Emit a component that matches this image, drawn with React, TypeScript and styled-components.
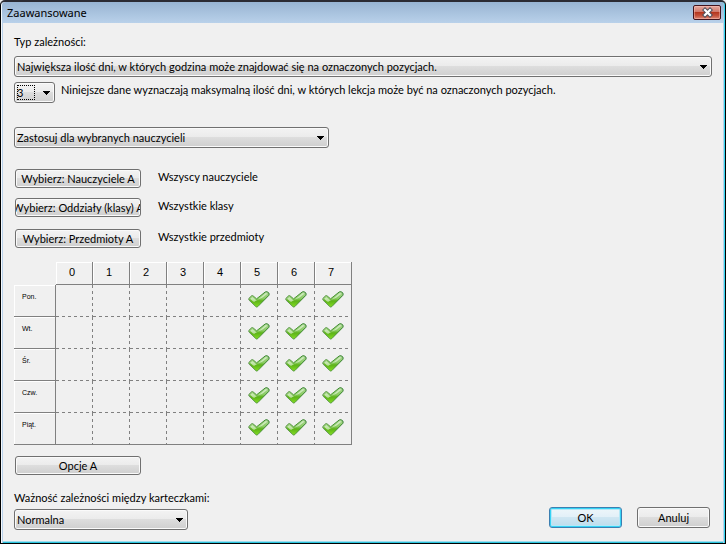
import React, { useState } from 'react';
import styled, { createGlobalStyle, css } from 'styled-components';

const Global = createGlobalStyle`
  * { box-sizing: border-box; }
  body { margin: 0; background: #f0f0f0; }
  body, button, select { font: 11px/14px Lato, "Open Sans", sans-serif; color: #000; }
`;

const Dialog = styled.div`
  min-height: 100vh;
  display: flex;
  flex-direction: column;
  border: 1px solid #000;
  border-top: 2px solid #2b2b33;
  border-radius: 5px 5px 0 0;
  background: #f0f0f0;
  box-shadow: inset 1px 0 #f4f9fd, inset 2px 0 #b9d1ea, inset -1px 0 #35d6ee, inset -2px 0 #b9d1ea,
    inset 0 -1px #2cc4dc, inset 0 -2px #9fdcee;
`;

const TitleBar = styled.header`
  height: 21px;
  margin: 0 1px;
  padding: 0 3px 0 5px;
  display: flex;
  align-items: center;
  justify-content: space-between;
  border-radius: 4px 4px 0 0;
  background: linear-gradient(#98b4d2, #b9d1ea);
`;

const Title = styled.h1`
  margin: 0;
  font: 11px/16px "Noto Sans", "Open Sans", sans-serif;
`;

const CloseButton = styled.button`
  width: 28px;
  height: 15px;
  padding: 0;
  display: grid;
  place-items: center;
  border: 1px solid #43141c;
  border-radius: 2px;
  background: linear-gradient(#e5aaa0, #d0786a 45%, #b5371f 50%, #c4523c 75%, #dc8a78);
  box-shadow: inset 0 0 0 1px rgba(255, 200, 190, 0.45);
`;

const Body = styled.main`
  flex: 1;
  display: flex;
  flex-direction: column;
  align-items: flex-start;
  padding: 11px 13px 13px;
`;

const Label = styled.label`
  display: block;
  line-height: 16px;
  white-space: nowrap;
`;

const Row = styled.div<{ $top: number; $gap?: number; $indent?: boolean }>`
  width: 100%;
  margin-top: ${(p) => p.$top}px;
  padding-left: ${(p) => (p.$indent ? 1 : 0)}px;
  display: flex;
  gap: ${(p) => p.$gap ?? 17}px;
`;

const SelectBox = styled.span<{ $width: string }>`
  position: relative;
  flex: none;
  display: block;
  width: ${(p) => p.$width};
  max-width: 100%;
`;

const face = css`
  border: 1px solid #707070;
  border-radius: 3px;
  background: linear-gradient(#f3f3f3, #ebebeb 48%, #dddddd 50%, #cfcfcf);
  box-shadow: inset 0 0 0 1px #fafafa;
`;

const Select = styled.select`
  ${face}
  appearance: none;
  display: block;
  width: 100%;
  height: 21px;
  padding: 0 20px 0 2px;
  outline: none;
`;

const Arrow = styled.svg`
  position: absolute;
  right: 5px;
  top: 9px;
  pointer-events: none;
`;

const FocusMark = styled.span`
  position: absolute;
  left: 3px;
  top: 3px;
  width: 18px;
  height: 15px;
  border: 1px dotted #000;
  pointer-events: none;
`;

const PushButton = styled.button<{ $width: number; $height: number; $primary?: boolean }>`
  ${face}
  flex: none;
  width: ${(p) => p.$width}px;
  height: ${(p) => p.$height}px;
  padding: 0 1px;
  display: flex;
  align-items: center;
  justify-content: center;
  overflow: hidden;
  white-space: nowrap;
  ${(p) =>
    p.$primary &&
    css`
      border-color: #3c7fb1;
      background: linear-gradient(#eef6fa, #e2f0f8 48%, #cfe6f2 50%, #bcdcec);
      box-shadow: inset 0 0 0 1px #35d3f5, inset 0 0 0 2px #b4e8f8;
    `}
`;

const ButtonText = styled.span`
  flex: none;
`;

const Note = styled.span`
  line-height: 16px;
`;

const Table = styled.table`
  width: 338px;
  margin-top: 14px;
  table-layout: fixed;
  border-collapse: separate;
  border-spacing: 0;
  th, td { padding: 0; }
`;

const Corner = styled.td`
  width: 42px;
`;

const Table_HeadCell = css`
  border-right: 1px solid #808080;
  border-bottom: 1px solid #808080;
  box-shadow: inset 1px 1px #fff;
`;

const HourHead = styled.th`
  ${Table_HeadCell}
  height: 23px;
  font: 11px/14px "Liberation Sans", sans-serif;
`;

const Hour = styled.span`
  display: block;
  padding: 0 4px 3px 0;
`;

const DayHead = styled.th`
  ${Table_HeadCell}
  height: 32px;
  vertical-align: top;
  font: 7px/10px "Liberation Sans", sans-serif;
  text-align: left;
`;

const DayName = styled.span`
  display: block;
  padding: 7px 0 0 8px;
`;

const solid = '#808080, #808080';
const dash = '#808080 0 3px, transparent 3px 6px';

const Cell = styled.td<{ $lastCol: boolean; $lastRow: boolean }>`
  height: 32px;
  background:
    ${(p) => (p.$lastCol ? `linear-gradient(${solid})` : `repeating-linear-gradient(to bottom, ${dash})`)}
      right / 1px 100% no-repeat,
    ${(p) => (p.$lastRow ? `linear-gradient(${solid})` : `repeating-linear-gradient(to right, ${dash})`)}
      bottom / 100% 1px no-repeat;
`;

const CellButton = styled.button`
  width: 100%;
  height: 31px;
  padding: 0 2px 3px 0;
  display: grid;
  place-items: center;
  border: 0;
  background: none;
`;

const Footer = styled.footer`
  width: 100%;
  margin-top: 15px;
  padding-right: 2px;
  display: flex;
  align-items: flex-end;
  justify-content: space-between;
`;

const Actions = styled.div`
  display: flex;
  gap: 15px;
  padding-bottom: 2px;
`;

const Field = styled.div`
  display: grid;
  gap: 3px;
`;

function Dropdown({ id, width, text, focused, label }: {
  id: string; width: string; text: string; focused?: boolean; label?: string;
}) {
  return (
    <SelectBox $width={width}>
      <Select id={id} aria-label={label} defaultValue={text}>
        <option>{text}</option>
      </Select>
      {focused && <FocusMark />}
      <Arrow width="7" height="4" viewBox="0 0 7 4" shapeRendering="crispEdges" aria-hidden="true">
        <path d="M0 0h7v1h-1v1h-1v1h-1v1h-1v-1h-1v-1h-1v-1h-1z" />
      </Arrow>
    </SelectBox>
  );
}

function Check() {
  return (
    <svg width="22" height="17" viewBox="0 0 22 17" aria-hidden="true">
      <defs>
        <linearGradient id="leaf" x1="0" y1="0" x2="0" y2="1">
          <stop offset="0" stopColor="#a9d694" />
          <stop offset="0.45" stopColor="#8acb62" />
          <stop offset="0.6" stopColor="#5cb318" />
          <stop offset="1" stopColor="#84de22" />
        </linearGradient>
        <linearGradient id="rim" x1="0" y1="0" x2="1" y2="0">
          <stop offset="0" stopColor="#6c9a60" />
          <stop offset="0.5" stopColor="#4f9838" />
          <stop offset="1" stopColor="#2f7a2c" />
        </linearGradient>
      </defs>
      <path
        d="M.8 7.4 3.8 4.6Q4.4 4.3 5 4.8L8.6 7.8 17.2 1Q18.2.4 19.2.8L21 2.2Q21.4 3.2 20.8 4.4L9.8 15.6Q8.8 16.6 7.8 15.6L.9 9Z"
        fill="url(#leaf)" stroke="url(#rim)" strokeLinejoin="round"
      />
      <path d="M2.2 7.8 4.3 6 8.7 9.4 17.9 2 19.4 2.8 14.6 6.6Q9.4 8.6 6.4 10.8L5 10.4Z" fill="#e8f7de" opacity="0.65" />
    </svg>
  );
}

const days = ['Pon.', 'Wt.', 'Śr.', 'Czw.', 'Piąt.'];
const hours = [0, 1, 2, 3, 4, 5, 6, 7];

export default function App() {
  const [marked, setMarked] = useState(() => days.map(() => hours.map((h) => h >= 5)));
  const toggle = (d: number, h: number) =>
    setMarked((all) => all.map((row, i) => (i === d ? row.map((v, j) => (j === h ? !v : v)) : row)));

  return (
    <>
      <Global />
      <Dialog role="dialog" aria-labelledby="title">
        <TitleBar>
          <Title id="title">Zaawansowane</Title>
          <CloseButton type="button" aria-label="Zamknij">
            <svg width="13" height="11" viewBox="0 0 13 11" aria-hidden="true">
              <path d="M4 3 9 8M9 3 4 8" stroke="#50505c" strokeWidth="4.2" strokeLinecap="square" />
              <path d="M4 3 9 8M9 3 4 8" stroke="#fff" strokeWidth="2.2" strokeLinecap="square" />
            </svg>
          </CloseButton>
        </TitleBar>
        <Body>
          <Label htmlFor="kind">Typ zależności:</Label>
          <Row $top={6}>
            <Dropdown id="kind" width="100%" text="Największa ilość dni, w których godzina może znajdować się na oznaczonych pozycjach." />
          </Row>
          <Row $top={5} $gap={6}>
            <Dropdown id="count" width="41px" text="3" focused />
            <Label htmlFor="count">
              Niniejsze dane wyznaczają maksymalną ilość dni, w których lekcja może być na oznaczonych pozycjach.
            </Label>
          </Row>
          <Row $top={24}>
            <Dropdown id="scope" width="315px" text="Zastosuj dla wybranych nauczycieli" label="Zakres" />
          </Row>
          <Row $top={21} $indent>
            <PushButton type="button" $width={126} $height={19}><ButtonText>Wybierz: Nauczyciele A</ButtonText></PushButton>
            <Note>Wszyscy nauczyciele</Note>
          </Row>
          <Row $top={10} $indent>
            <PushButton type="button" $width={126} $height={19}><ButtonText>Wybierz: Oddziały (klasy) A</ButtonText></PushButton>
            <Note>Wszystkie klasy</Note>
          </Row>
          <Row $top={12} $indent>
            <PushButton type="button" $width={126} $height={19}><ButtonText>Wybierz: Przedmioty A</ButtonText></PushButton>
            <Note>Wszystkie przedmioty</Note>
          </Row>
          <Table>
            <thead>
              <tr>
                <Corner />
                {hours.map((h) => <HourHead key={h} scope="col"><Hour>{h}</Hour></HourHead>)}
              </tr>
            </thead>
            <tbody>
              {days.map((day, d) => (
                <tr key={day}>
                  <DayHead scope="row"><DayName>{day}</DayName></DayHead>
                  {hours.map((h) => (
                    <Cell key={h} $lastCol={h === hours.length - 1} $lastRow={d === days.length - 1}>
                      <CellButton type="button" aria-label={`${day} ${h}`} aria-pressed={marked[d][h]} onClick={() => toggle(d, h)}>
                        {marked[d][h] && <Check />}
                      </CellButton>
                    </Cell>
                  ))}
                </tr>
              ))}
            </tbody>
          </Table>
          <Row $top={11} $indent>
            <PushButton type="button" $width={126} $height={19}><ButtonText>Opcje A</ButtonText></PushButton>
          </Row>
          <Footer>
            <Field>
              <Label htmlFor="weight">Ważność zależności między karteczkami:</Label>
              <Dropdown id="weight" width="174px" text="Normalna" />
            </Field>
            <Actions>
              <PushButton type="button" $width={73} $height={21} $primary>OK</PushButton>
              <PushButton type="button" $width={73} $height={21}>Anuluj</PushButton>
            </Actions>
          </Footer>
        </Body>
      </Dialog>
    </>
  );
}
